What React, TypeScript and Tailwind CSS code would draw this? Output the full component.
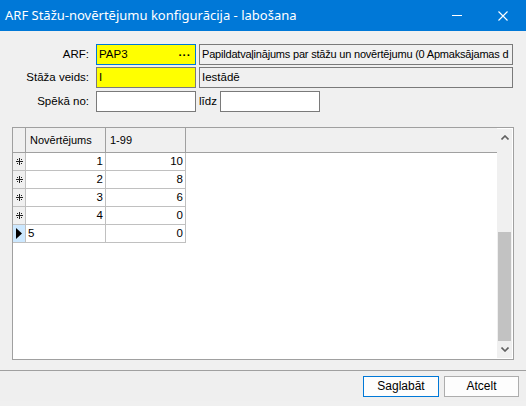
import React from "react";

const rows = [
  { a: "1", b: "10", mark: "new" },
  { a: "2", b: "8", mark: "new" },
  { a: "3", b: "6", mark: "new" },
  { a: "4", b: "0", mark: "new" },
  { a: "5", b: "0", mark: "current" },
];

const NewRowMark = () => (
  <svg width="7" height="7" viewBox="0 0 7 7" shapeRendering="crispEdges">
    <path d="M3 0h1v7H3zM0 3h7v1H0zM1 1h1v1H1zM5 1h1v1H5zM1 5h1v1H1zM5 5h1v1H5z" fill="#222" />
  </svg>
);

const CurrentRowMark = () => (
  <svg width="6" height="11" viewBox="0 0 6 11">
    <path d="M0 0L6 5.5L0 11Z" fill="#000" />
  </svg>
);

export default function App() {
  return (
    <div
      className="w-[526px] h-[406px] bg-[#f0f0f0] flex flex-col text-[11.5px] text-black overflow-hidden"
      style={{ fontFamily: '"Liberation Sans", Arial, sans-serif' }}
    >
      {/* title bar */}
      <div className="h-[31px] bg-[#0078d7] flex items-center justify-between text-white shrink-0">
        <span className="pl-[5px] text-[13px] leading-none" style={{ fontFamily: '"Noto Sans", "Open Sans", sans-serif' }}>
          ARF Stāžu-novērtējumu konfigurācija - labošana
        </span>
        <div className="flex items-center h-full">
          <div className="w-[46px] h-full flex items-center justify-center">
            <div className="w-[10px] h-px bg-white" />
          </div>
          <div className="w-[46px] h-full flex items-center justify-center">
            <svg width="10" height="10" viewBox="0 0 10 10">
              <path d="M0.5 0.5L9.5 9.5M9.5 0.5L0.5 9.5" stroke="#fff" strokeWidth="1.1" />
            </svg>
          </div>
        </div>
      </div>

      {/* form */}
      <div className="pt-[13px] flex flex-col">
        <div className="flex items-center h-[21px]">
          <label className="w-[90px] text-right pr-[1px]">ARF:</label>
          <div className="ml-[6px] w-[100px] h-full border border-[#0078d7] bg-[#ffff00] flex items-center justify-between pl-[2px] pr-[4px]">
            <span>PAP3</span>
            <span className="font-bold tracking-[1px] leading-none -mt-[4px]">...</span>
          </div>
          <div className="ml-[3px] w-[314px] h-full border border-[#7a7a7a] bg-[#f0f0f0] flex items-center px-[2px] overflow-hidden whitespace-nowrap text-[11px] tracking-[-0.2px]">
            Papildatvaļinājums par stāžu un novērtējumu (0 Apmaksājamas d
          </div>
        </div>
        <div className="flex items-center h-[21px] mt-[2px]">
          <label className="w-[90px] text-right pr-[1px]">Stāža veids:</label>
          <div className="ml-[6px] w-[100px] h-full border border-[#7a7a7a] bg-[#ffff00] flex items-center pl-[2px]">
            I
          </div>
          <div className="ml-[3px] w-[314px] h-full border border-[#7a7a7a] bg-[#f0f0f0] flex items-center px-[2px]">
            Iestādē
          </div>
        </div>
        <div className="flex items-center h-[21px] mt-[3px]">
          <label className="w-[90px] text-right pr-[1px]">Spēkā no:</label>
          <div className="ml-[6px] w-[100px] h-full border border-[#7a7a7a] bg-white" />
          <span className="ml-[3px] w-[21px]">līdz</span>
          <div className="w-[100px] h-full border border-[#7a7a7a] bg-white" />
        </div>
      </div>

      {/* data grid */}
      <div className="mt-[15px] mx-[12px] h-[233px] border border-[#a0a0a0] bg-white flex">
        <div className="flex-1 flex flex-col">
          <div className="flex h-[25px] bg-[#f0f0f0] border-b border-[#a0a0a0]">
            <div className="w-[13px] border-r border-[#a0a0a0]" />
            <div className="w-[80px] border-r border-[#a0a0a0] flex items-center pl-[4px] text-[11px]">Novērtējums</div>
            <div className="w-[80px] border-r border-[#a0a0a0] flex items-center pl-[4px] text-[11px]">1-99</div>
          </div>
          {rows.map((r, i) => (
            <div key={i} className="flex h-[18px] text-[11.5px]">
              <div
                className={`w-[13px] border-r border-b border-[#c0c0c0] flex items-center justify-center ${
                  r.mark === "current" ? "bg-[#cce8ff]" : "bg-[#f0f0f0]"
                }`}
              >
                {r.mark === "current" ? <CurrentRowMark /> : <NewRowMark />}
              </div>
              <div
                className={`w-[80px] border-r border-b border-[#c0c0c0] flex items-center px-[2px] ${
                  r.mark === "current" ? "justify-start" : "justify-end"
                }`}
              >
                {r.a}
              </div>
              <div className="w-[80px] border-r border-b border-[#c0c0c0] flex items-center justify-end px-[2px]">
                {r.b}
              </div>
            </div>
          ))}
        </div>
        {/* vertical scrollbar */}
        <div className="w-[15px] my-px mr-px bg-[#f0f0f0] flex flex-col">
          <div className="h-[17px] flex items-center justify-center">
            <svg width="8" height="5" viewBox="0 0 8 5">
              <path d="M0.5 4.5L4 1L7.5 4.5" stroke="#606060" strokeWidth="1.6" fill="none" />
            </svg>
          </div>
          <div className="flex-1 flex flex-col justify-end">
            <div className="h-[109px] bg-[#c2c2c2] mx-px" />
          </div>
          <div className="h-[17px] flex items-center justify-center">
            <svg width="8" height="5" viewBox="0 0 8 5">
              <path d="M0.5 0.5L4 4L7.5 0.5" stroke="#606060" strokeWidth="1.6" fill="none" />
            </svg>
          </div>
        </div>
      </div>

      {/* footer */}
      <div className="mt-[10px] border-t border-[#a0a0a0] bg-[#efefef] h-[31px] flex items-center justify-end pr-[7px] gap-[5px]">
        <button className="w-[76px] h-[21px] border border-[#0078d7] bg-[#fdfdfd] text-[12px]">Saglabāt</button>
        <button className="w-[75px] h-[21px] border border-[#adadad] bg-[#fdfdfd] text-[12px]">Atcelt</button>
      </div>
    </div>
  );
}
